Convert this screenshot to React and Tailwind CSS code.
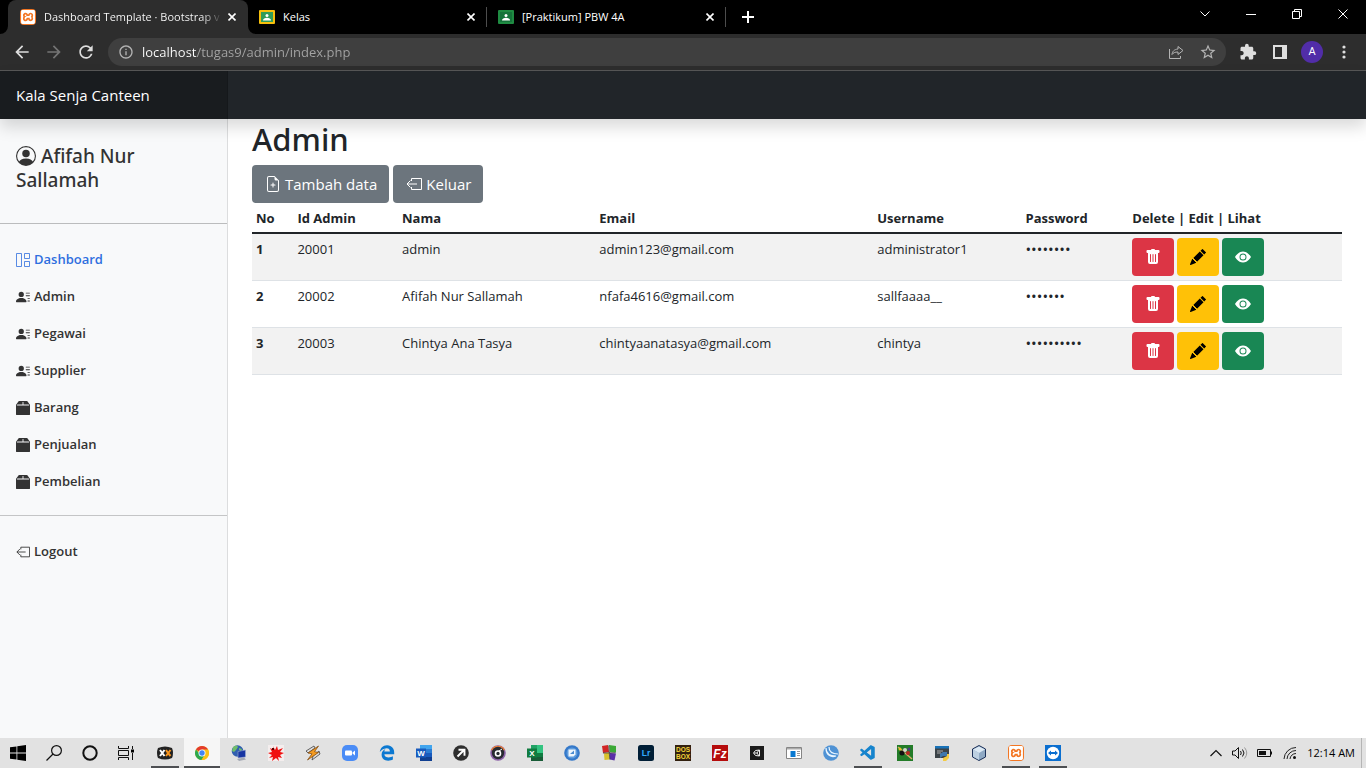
import React from "react";
import {
  BsBox2Fill,
  BsEyeFill,
  BsFileEarmarkPlus,
  BsPencilFill,
  BsPersonCircle,
  BsPersonLinesFill,
  BsTrashFill,
} from "react-icons/bs";
import { MdArrowBack, MdArrowForward, MdExtension, MdInfoOutline, MdRefresh, MdStarBorder } from "react-icons/md";
import { FaEdgeLegacy } from "react-icons/fa";
import { SiXampp } from "react-icons/si";
import { VscVscode } from "react-icons/vsc";

/* ---------- page icons ---------- */

function ExitIcon({ className }) {
  return (
    <svg viewBox="0 0 16 16" fill="none" stroke="currentColor" className={className} aria-hidden="true">
      <path d="M5.5 5V2.5h10v11h-10V11M11 8H1M4.5 4.5 1 8l3.5 3.5" />
    </svg>
  );
}

function GridIcon({ className }) {
  return (
    <svg viewBox="0 0 14 14" fill="none" stroke="currentColor" className={className} aria-hidden="true">
      <path d="M.5.5h5v13h-5zM8.500.5h5v5h-5zM8.500 8.500h5v5h-5z" strokeOpacity=".8" />
    </svg>
  );
}

/* ---------- browser icons ---------- */

function Cross({ className }) {
  return (
    <svg viewBox="0 0 8 8" fill="none" stroke="currentColor" strokeWidth="1.6" className={className} aria-hidden="true">
      <path d="m.5.5 7 7M7.500.5l-7 7" />
    </svg>
  );
}

function XamppIcon({ className }) {
  return (
    <span className={"flex items-center justify-center rounded-sm bg-[#f37623] text-white " + className}>
      <SiXampp className="size-3.5" />
    </span>
  );
}

function ClassroomIcon({ frame, board }) {
  return (
    <svg viewBox="0 0 16 14" className="h-3.5 w-4 shrink-0" aria-hidden="true">
      <rect width="16" height="14" rx="1" fill={frame} />
      <rect x="2" y="2" width="12" height="10" fill={board} />
      <circle cx="8" cy="5.500" r="1.500" fill="#fff" />
      <path d="M4 10.500c0-2 2-2.800 4-2.800s4 .8 4 2.800z" fill="#fff" />
    </svg>
  );
}

function Tab({ icon, title, active }) {
  if (active) {
    return (
      <div className="relative ml-2 flex h-full w-60 items-center rounded-t-lg bg-[#2d2d2d] pr-2 pl-3">
        <svg viewBox="0 0 8 8" className="absolute bottom-0 -left-2 size-2" aria-hidden="true">
          <path d="M8 0v8H0a8 8 0 0 0 8-8z" fill="#2d2d2d" />
        </svg>
        <svg viewBox="0 0 8 8" className="absolute -right-2 bottom-0 size-2" aria-hidden="true">
          <path d="M0 0v8h8a8 8 0 0 1-8-8z" fill="#2d2d2d" />
        </svg>
        {icon}
        <span className="ml-2 flex-1 bg-[linear-gradient(90deg,#fff_158px,transparent_178px)] bg-clip-text whitespace-nowrap text-transparent">
          {title}
        </span>
        <button aria-label="Close tab" className="flex size-4 items-center justify-center">
          <Cross className="size-2" />
        </button>
      </div>
    );
  }
  return (
    <div className="flex h-5 w-[239px] items-center gap-2 border-r border-[#4d4d4d] pr-[7px] pl-[11px]">
      {icon}
      <span className="flex-1 whitespace-nowrap">{title}</span>
      <button aria-label="Close tab" className="flex size-4 items-center justify-center">
        <Cross className="size-2" />
      </button>
    </div>
  );
}

function WindowButton({ label, d }) {
  return (
    <button aria-label={label} className="flex h-7 w-[46px] items-center justify-center">
      <svg viewBox="0 0 10 10" fill="none" stroke="currentColor" className="size-2.5" aria-hidden="true">
        <path d={d} />
      </svg>
    </button>
  );
}

function ToolButton({ label, children, className = "" }) {
  return (
    <button aria-label={label} className={"flex size-8 shrink-0 items-center justify-center " + className}>
      {children}
    </button>
  );
}

function Browser() {
  return (
    <header className="text-white">
      <div className="flex h-[34px] items-start justify-between bg-black text-[11px]">
        <div className="flex h-full items-center">
          <Tab active icon={<XamppIcon className="size-4 shrink-0" />} title="Dashboard Template · Bootstrap v" />
          <Tab icon={<ClassroomIcon frame="#f6bf0c" board="#2f9c59" />} title="Kelas" />
          <Tab icon={<ClassroomIcon frame="#1f8b42" board="#15733a" />} title="[Praktikum] PBW 4A" />
          <button aria-label="New tab" className="ml-4 flex size-3">
            <svg viewBox="0 0 12 12" stroke="currentColor" strokeWidth="2" aria-hidden="true">
              <path d="M6 0v12M0 6h12" />
            </svg>
          </button>
        </div>
        <div className="flex">
          <WindowButton label="Search tabs" d="m.5 2.500 4.500 4.500 4.500-4.500" />
          <WindowButton label="Minimize" d="M0 5.500h10" />
          <WindowButton label="Restore" d="M.5 2.500h7v7h-7zM2.500 2.500v-2h7v7h-2" />
          <WindowButton label="Close" d="m.5.5 9 9M9.500.5l-9 9" />
        </div>
      </div>
      <div className="flex h-[37px] items-center border-b border-[#575757] bg-[#2d2d2d] px-1.5 text-[#dedede]">
        <ToolButton label="Back"><MdArrowBack className="size-5" /></ToolButton>
        <ToolButton label="Forward" className="text-[#747474]"><MdArrowForward className="size-5" /></ToolButton>
        <ToolButton label="Reload"><MdRefresh className="size-5" /></ToolButton>
        <div className="mx-1.5 flex h-7 flex-1 items-center rounded-full bg-[#3f3f3f] pl-2.5 text-[#b4b4b4]">
          <MdInfoOutline className="size-4" />
          <input
            aria-label="Address"
            defaultValue="localhost/tugas9/admin/index.php"
            className="ml-2 h-full min-w-0 flex-1 bg-[linear-gradient(90deg,#fff_55px,#a5a5a5_55px)] bg-clip-text text-[13px] text-transparent outline-none"
          />
          <ToolButton label="Share">
            <svg viewBox="0 0 16 16" fill="none" stroke="currentColor" className="size-4" aria-hidden="true">
              <path d="M1.500 5v9.500h11V12" />
              <path d="M10 2.500 15 6.500l-5 4V8c-3 0-5 .8-6 2.500C4.300 7.500 6 5.500 10 5z" />
            </svg>
          </ToolButton>
          <ToolButton label="Bookmark" className="mr-0.5"><MdStarBorder className="size-[18px]" /></ToolButton>
        </div>
        <ToolButton label="Extensions"><MdExtension className="size-[18px]" /></ToolButton>
        <ToolButton label="Side panel">
          <svg viewBox="0 0 14 14" className="size-3.5" fill="currentColor" aria-hidden="true">
            <path fillRule="evenodd" d="M0 0h14v14H0zM2 2v10h7V2z" />
          </svg>
        </ToolButton>
        <ToolButton label="Profile">
          <span className="flex size-[22px] items-center justify-center rounded-full bg-[#512da8] font-['Roboto',sans-serif] text-[11px] text-white">A</span>
        </ToolButton>
        <ToolButton label="Menu">
          <svg viewBox="0 0 4 14" className="h-3.5 w-1" fill="currentColor" aria-hidden="true">
            <circle cx="2" cy="2" r="1.600" /><circle cx="2" cy="7" r="1.600" /><circle cx="2" cy="12" r="1.600" />
          </svg>
        </ToolButton>
      </div>
    </header>
  );
}

/* ---------- page ---------- */

const NAV = [
  ["Dashboard", GridIcon],
  ["Admin", BsPersonLinesFill],
  ["Pegawai", BsPersonLinesFill],
  ["Supplier", BsPersonLinesFill],
  ["Barang", BsBox2Fill],
  ["Penjualan", BsBox2Fill],
  ["Pembelian", BsBox2Fill],
];

function NavLink({ label, Icon, active }) {
  return (
    <li>
      <a
        href="#"
        className={"flex items-center gap-1 px-4 pt-[9px] pb-[7px] text-[13px] leading-[21px] font-semibold " + (active ? "text-[#2f6fdf]" : "text-[#333333]")}
      >
        <Icon className="size-3.5" />
        {label}
      </a>
    </li>
  );
}

function Sidebar() {
  return (
    <nav className="w-[228px] shrink-0 border-r border-[#dcddde] bg-[#f8f9fa]">
      <h2 className="px-4 pt-[25px] pb-[31px] font-['Noto_Sans',sans-serif] text-[19px] leading-6 font-medium text-[#333333]">
        <BsPersonCircle className="inline size-5 align-[-3px]" /> Afifah Nur Sallamah
      </h2>
      <hr className="mb-4 border-[#bbbcbd]" />
      <ul>
        {NAV.map(([label, Icon], i) => (
          <NavLink key={label} label={label} Icon={Icon} active={i === 0} />
        ))}
      </ul>
      <hr className="my-4 border-[#c4c5c6]" />
      <ul>
        <NavLink label="Logout" Icon={ExitIcon} />
      </ul>
    </nav>
  );
}

const ROWS = [
  ["20001", "admin", "admin123@gmail.com", "administrator1", "••••••••"],
  ["20002", "Afifah Nur Sallamah", "nfafa4616@gmail.com", "sallfaaaa__", "•••••••"],
  ["20003", "Chintya Ana Tasya", "chintyaanatasya@gmail.com", "chintya", "••••••••••"],
];

function ActionButton({ label, className, children }) {
  return (
    <button aria-label={label} className={"flex h-[38px] w-[42px] items-center justify-center rounded " + className}>
      {children}
    </button>
  );
}

function Main() {
  const head = "px-1 pt-[5px] pb-[3px] font-bold";
  return (
    <main className="min-w-0 flex-1 px-6">
      <h1 className="mb-1.5 font-['Noto_Sans',sans-serif] text-[31px] leading-10 font-medium">Admin</h1>
      <div className="flex gap-1 text-[15px] text-white">
        <button className="flex h-[38px] items-center gap-1 rounded bg-[#6c757d] pr-3 pl-[13px]">
          <BsFileEarmarkPlus className="size-4" />
          Tambah data
        </button>
        <button className="flex h-[38px] items-center gap-1 rounded bg-[#6c757d] pr-3 pl-[13px]">
          <ExitIcon className="size-4" />
          Keluar
        </button>
      </div>
      <table className="w-full table-fixed border-collapse text-left text-[13px] leading-[21px]">
        <colgroup>
          <col className="w-[3.8%]" />
          <col className="w-[9.6%]" />
          <col className="w-[18.1%]" />
          <col className="w-[25.5%]" />
          <col className="w-[13.6%]" />
          <col className="w-[9.8%]" />
          <col />
        </colgroup>
        <thead>
          <tr className="border-b-2 border-[#212529]">
            <th className={head}>No</th>
            <th className={head}>Id Admin</th>
            <th className={head}>Nama</th>
            <th className={head}>Email</th>
            <th className={head}>Username</th>
            <th className={head}>Password</th>
            <th className={head}>Delete | Edit | Lihat</th>
          </tr>
        </thead>
        <tbody>
          {ROWS.map((row, i) => (
            <tr key={row[0]} className="border-b border-[#dee2e6] align-top odd:bg-[#f2f2f2]">
              <th className={head}>{i + 1}</th>
              {row.map((cell, c) => (
                <td key={c} className={"px-1 pt-[5px] pb-[3px] " + (c === 4 ? "text-[15px]" : "")}>{cell}</td>
              ))}
              <td className="p-1">
                <div className="flex gap-[3px]">
                  <ActionButton label="Delete" className="bg-[#dc3545] text-white"><BsTrashFill className="size-4" /></ActionButton>
                  <ActionButton label="Edit" className="bg-[#ffc107] text-black"><BsPencilFill className="size-4" /></ActionButton>
                  <ActionButton label="Lihat" className="bg-[#198754] text-white"><BsEyeFill className="size-4" /></ActionButton>
                </div>
              </td>
            </tr>
          ))}
        </tbody>
      </table>
    </main>
  );
}

/* ---------- taskbar ---------- */

function Svg({ children }) {
  return <svg viewBox="0 0 16 16" className="size-4" aria-hidden="true">{children}</svg>;
}

const letter = { textAnchor: "middle", fontFamily: "Liberation Sans, sans-serif", fontWeight: "bold" };

const SYSTEM = [
  ["Start", <Svg><path d="M0 2.300 6.500 1.400V7.600H0zM7.300 1.300 16 0v7.600H7.300zM0 8.400h6.500v6.200L0 13.700zM7.300 8.400H16V16l-8.700-1.300z" /></Svg>],
  ["Search", <Svg><g fill="none" stroke="#111" strokeWidth="1.200"><circle cx="10.500" cy="5.500" r="4.900" /><path d="M7 9 .5 15.500" /></g></Svg>],
  ["Cortana", <Svg><circle cx="8" cy="8" r="6.700" fill="none" stroke="#111" strokeWidth="2" /></Svg>],
  ["Task view", <Svg><path d="M.5 1v2.500h10V1M.5 5.500h10v5H.5zM.5 15v-2.500h10V15M14.500 1v3M14.500 8v7" fill="none" stroke="#111" /><path d="M13 4.500h3v3h-3z" /></Svg>],
];

const APPS = [
  ["XAMPP tools", "open", <Svg><path d="M1 3q7-3 14 0 2 5 0 10-7 3-14 0-2-5 0-10z" fill="#222" /><path d="m3 5 4.500 6M7.500 5 3 11" stroke="#fff" strokeWidth="2" /><path d="m13.500 5-4.500 6M9 5l2 3" stroke="#f7941d" strokeWidth="2" fill="none" /><path d="m11 8 2.500 3" stroke="#f7941d" strokeWidth="2" /></Svg>],
  ["Chrome", "active", <Svg><circle cx="8" cy="8" r="7" fill="#fbc116" /><path d="M8 8 1.940 4.500A7 7 0 0 1 14.060 4.500z" fill="#e33b2e" /><path d="M1.940 4.500A7 7 0 0 0 7.500 15L11 9.500 8 8H5z" fill="#2da94f" /><path d="M8 4.500h6.060A7 7 0 0 1 7.500 15L11 9.700z" fill="#fbc116" /><circle cx="8" cy="8" r="3.500" fill="#fff" /><circle cx="8" cy="8" r="2.700" fill="#4285f4" /></Svg>],
  ["Network", "", <Svg><circle cx="6.500" cy="6" r="5.800" fill="#315fb0" /><path d="M2 2q4-3 5 0L5 5 3 7 1 6zM8 3l3 1-1 2-2-1z" fill="#70bd6b" /><path d="m7 6.500 7.500-1.500v7L7 13z" fill="#1735a3" stroke="#9facd0" strokeWidth=".6" /><path d="m6 14 7-1.500 2 2L8 16z" fill="#a4a9b5" /></Svg>],
  ["Splat", "", <Svg><path d="M0 0h16v16H0z" fill="#f4eeee" /><path d="m5 1 2 4 2-4 1 4 5-2-3 4 4 1-4 2 2 3-4-1 1 4-3-3-4 3 1-4-4 1 3-3-4-2 4-1-2-4 4 2z" fill="#f00f0f" /><path d="M4 3h2v2H4z" fill="#500" /></Svg>],
  ["Winamp", "", <Svg><path d="m1 6 8-5 1 2-7 5zM7 15l8-6-1-3-6 5z" fill="#ddd" stroke="#444" strokeWidth=".8" /><path d="M13.500 1 3 8l4 .8L2.500 15l11-7.500-4-.8z" fill="#f49b21" stroke="#7a430b" strokeWidth=".7" /></Svg>],
  ["Zoom", "", <Svg><rect width="16" height="16" rx="5" fill="#4a8cf6" /><rect x="3" y="5.500" width="7" height="5" rx="1" fill="#fff" /><path d="m10.500 7.500 2.500-2v5l-2.500-2z" fill="#fff" /></Svg>],
  ["Edge", "", <FaEdgeLegacy className="size-4 text-[#0b78d1]" />],
  ["Word", "", <Svg><path d="M4 0h12v8H4z" fill="#41a5ee" /><path d="M4 4h12v4H4z" fill="#2b7cd3" /><path d="M4 8h12v4H4z" fill="#185abd" /><path d="M4 12h12v4H4z" fill="#103f91" /><path d="M0 3.500h10v9H0z" fill="#185abd" /><text x="5" y="10.800" fontSize="8" fill="#fff" {...letter}>W</text></Svg>],
  ["Shortcut", "", <Svg><circle cx="8" cy="8" r="7.800" fill="#2e2e2e" /><path d="m4.500 11.500 6-6M5.500 4.700h6v6" fill="none" stroke="#fff" strokeWidth="1.900" /></Svg>],
  ["Music", "", <Svg><circle cx="8" cy="8" r="7.800" fill="#8d62a8" /><path d="M1 5a7.800 7.800 0 0 1 14 0L8 8z" fill="#ed8038" /><circle cx="8" cy="8" r="6.200" fill="#272a31" /><circle cx="8" cy="8.500" r="2.500" fill="none" stroke="#fff" strokeWidth="1.600" /><path d="m9 6 3-2" stroke="#fff" /></Svg>],
  ["Excel", "", <Svg><path d="M4 0h12v8H4z" fill="#33c481" /><path d="M4 0h6v8H4z" fill="#21a366" /><path d="M4 8h12v8H4z" fill="#107c41" /><path d="M4 12h12v4H4z" fill="#185c37" /><path d="M0 3.500h10v9H0z" fill="#107c41" /><text x="5" y="10.800" fontSize="8" fill="#fff" {...letter}>X</text></Svg>],
  ["Remote screen", "", <Svg><circle cx="8" cy="8" r="7.800" fill="#3478c9" /><circle cx="8" cy="8" r="5.500" fill="#5c9bdd" /><path d="M4.500 4.500h7v5l-2 2h-5z" fill="#eef6fd" /><path d="m6 9 4-3.500V9z" fill="#4a8cd2" /></Svg>],
  ["Blocks", "", <Svg><path d="m1 1 6-1 1 7-6 1z" fill="#d12525" /><path d="m8 0 7 1v6.500L9 7z" fill="#3ba936" /><path d="m3 8.500 5-1 .5 7-5 .5z" fill="#d8c12b" /><path d="m9 8 6 .5-1.500 7-4.500-1z" fill="#5b2fa8" /><path d="m7.800.5 1 14M2 8l12.500-.2" stroke="#333" strokeWidth=".8" /></Svg>],
  ["Lightroom", "", <Svg><rect width="16" height="16" rx="2.500" fill="#001e36" /><text x="8" y="11.200" fontSize="8.500" fill="#31a8ff" {...letter}>Lr</text></Svg>],
  ["DOSBox", "", <Svg><path d="M0 0h16v16H0z" fill="#32200f" /><text x="8" y="7.300" fontSize="6.500" fill="#f3d43a" {...letter}>DOS</text><text x="8" y="14" fontSize="6.500" fill="#f3d43a" {...letter}>BOX</text></Svg>],
  ["FileZilla", "", <Svg><path d="M0 0h16v16H0z" fill="#b50c0c" /><text x="8" y="12.500" fontSize="12" fontStyle="italic" fill="#fff" {...letter}>Fz</text></Svg>],
  ["Unity", "", <Svg><path d="M1 1h14v14H1z" fill="#1b1b1b" /><path d="m4.500 8 2-2.500L10.500 5v6l-4-.5zM5 8h3l2-3M8 8l2 3" fill="none" stroke="#eee" /></Svg>],
  ["Viewer", "", <Svg><path d="M.5 2.500h15v11H.5z" fill="#fff" stroke="#858585" /><path d="M1 3h14v1.500H1z" fill="#aaa" /><path d="M4.500 6h5v6h-5z" fill="#0878d1" /><path d="M11 6.500h3M11 8.500h3M11 10.500h3" stroke="#999" /></Svg>],
  ["Editor", "", <Svg><circle cx="8" cy="8" r="7.800" fill="#4f92d4" /><path d="M3 3c0 5 3 8 10 8-5 2-10-1-10-8zM6 2c0 5 3 7 9 7" fill="none" stroke="#e9f5ff" strokeWidth="1.200" /></Svg>],
  ["Visual Studio Code", "open", <VscVscode className="size-[18px] text-[#1684cd]" />],
  ["Billiards", "", <Svg><path d="M0 0h16v16H0z" fill="#237c28" /><path d="m1 2 14 12" stroke="#d7ad69" strokeWidth="1.500" /><circle cx="5" cy="8" r="2.500" fill="#111" /><circle cx="8" cy="5" r="2" fill="#d7d4ca" /><circle cx="11" cy="8" r="2" fill="#bb2424" /><circle cx="3" cy="4" r="1.500" fill="#e5bf27" /><circle cx="12" cy="4" r="1.500" fill="#4b3b88" /></Svg>],
  ["Python editor", "", <Svg><path d="M1 1h14v12H1z" fill="#3c4347" /><path d="M1 1h14v2.500H1z" fill="#1872b8" /><path d="M3 6h6M3 8h4" stroke="#aaa" /><path d="M9 7h4v4H9l-3 2V9z" fill="#3f78ad" /><path d="M13 9h2v4l-3 3H9v-3l4-2z" fill="#f4cc43" /></Svg>],
  ["NetBeans", "", <Svg><path d="m8 .5 6.500 3.500v8L8 15.500 1.500 12V4z" fill="#8fa9c4" stroke="#1d3159" /><path d="M8 8 2 4.500 8 1.500l6 3z" fill="#dce9f4" /><path d="M8 8v7l-6-3.500v-7z" fill="#bdd0e1" /></Svg>],
  ["XAMPP", "open", <XamppIcon className="size-4" />],
  ["TeamViewer", "open", <Svg><path d="M0 0h16v16H0z" fill="#0b6fd0" /><circle cx="8" cy="8" r="6.200" fill="#fff" /><path d="m3 8 3-2.500V7h4V5.500L13 8l-3 2.500V9H6v1.500z" fill="#0b6fd0" /></Svg>],
];

function TaskButton({ label, state, children }) {
  return (
    <button
      aria-label={label}
      className={"relative flex h-full w-9 shrink-0 items-center justify-center " + (state === "active" ? "bg-[#f6f6f6]" : "")}
    >
      {children}
      {state === "active" && <span className="absolute inset-x-0 bottom-0 h-0.5 bg-[#4d4f52]" />}
      {state === "open" && <span className="absolute inset-x-1 bottom-0 h-0.5 bg-[#4d4f52]" />}
    </button>
  );
}

function Taskbar() {
  return (
    <footer className="flex h-[30px] items-center justify-between bg-[#e2e2e2] text-black">
      <div className="flex h-full">
        {SYSTEM.map(([label, icon]) => (
          <TaskButton key={label} label={label}>{icon}</TaskButton>
        ))}
        <div className="ml-[3px] flex h-full gap-px">
          {APPS.map(([label, state, icon]) => (
            <TaskButton key={label} label={label} state={state}>{icon}</TaskButton>
          ))}
        </div>
      </div>
      <div className="mr-1 flex h-full items-center border-r border-[#b5b5b5] pr-1.5">
        <div className="mr-2.5 flex items-center gap-2">
          <svg viewBox="0 0 14 16" className="h-4 w-3.5" fill="none" stroke="#111" strokeWidth="1.200" aria-hidden="true">
            <path d="m1.500 11 5.500-5.500 5.500 5.500" />
          </svg>
          <svg viewBox="0 0 18 16" className="h-4 w-[18px]" fill="none" stroke="#111" aria-hidden="true">
            <path d="M1.500 6v4H4l3.500 3.500v-11L4 6z" />
            <path d="M9.500 6q1.500 2 0 4M11.500 4.500q3 3.500 0 7" />
            <path d="M13.500 2.500q4.500 5.500 0 11" stroke="#999" />
          </svg>
          <svg viewBox="0 0 16 16" className="size-4" aria-hidden="true">
            <path d="M.5 4.500h13v7H.5zM14.500 6.500v3" fill="none" stroke="#111" />
            <path d="M2 6h7v4H2z" fill="#111" />
          </svg>
          <svg viewBox="0 0 14 14" className="ml-0.5 size-3.5" fill="none" stroke="#222" aria-hidden="true">
            <path d="M1 13A12 12 0 0 1 13 1.500M4 13a9 9 0 0 1 9-8.500M7 13a6 6 0 0 1 6-5.500" />
            <circle cx="11.500" cy="11.500" r="1.500" fill="#111" stroke="none" />
          </svg>
        </div>
        <time className="text-[11px] whitespace-nowrap">12:14 AM</time>
      </div>
    </footer>
  );
}

export default function App() {
  return (
    <div className="flex min-h-screen flex-col bg-white font-['Open_Sans','Noto_Sans',sans-serif] text-[#212529]">
      <Browser />
      <div className="relative z-10 flex h-12 bg-[#212529] shadow-[0_8px_16px_rgba(0,0,0,0.15)]">
        <a href="#" className="flex w-[228px] items-center border-r border-[#15181b] bg-[#191c1f] px-4 text-[15px] text-white">
          Kala Senja Canteen
        </a>
      </div>
      <div className="flex flex-1">
        <Sidebar />
        <Main />
      </div>
      <Taskbar />
    </div>
  );
}
